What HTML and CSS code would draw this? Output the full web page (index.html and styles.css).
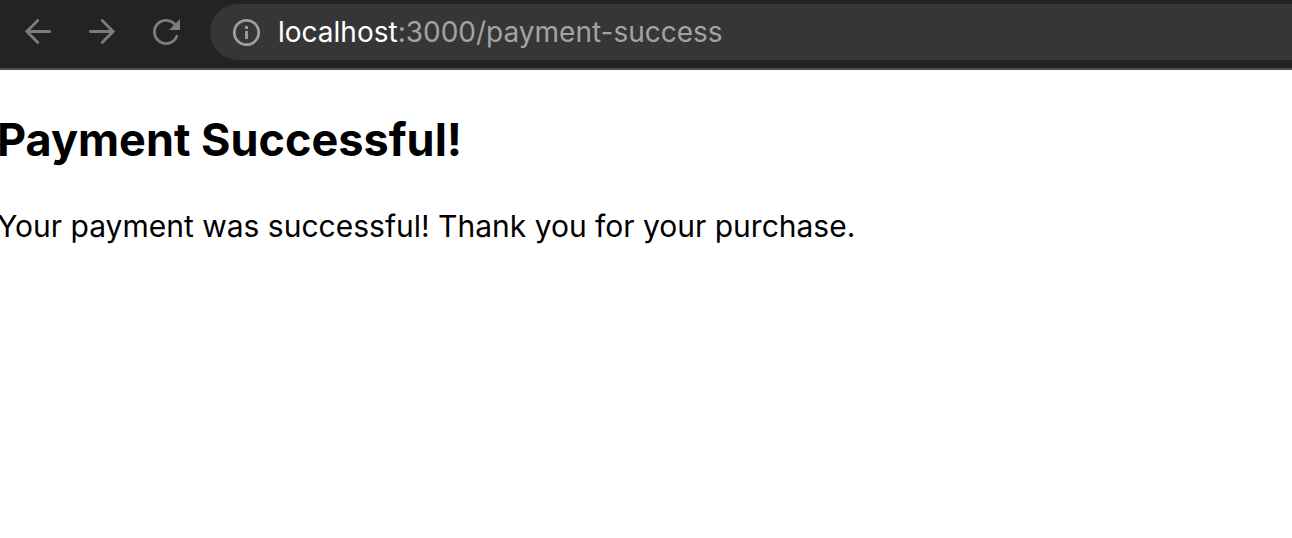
FILE: index.html
```html
<!DOCTYPE html>
<html lang="en">
<head>
<meta charset="utf-8">
<title>Payment Successful</title>
<link rel="stylesheet" href="styles.css">
</head>
<body>
<header class="toolbar">
  <nav class="nav" aria-label="Browser">
    <button class="nav-button" type="button" aria-label="Back">
      <svg class="icon" viewBox="0 0 32 32"><path d="M27.600 15.500H4.800M15.800 4.500L4.800 15.500l11 11"/></svg>
    </button>
    <button class="nav-button" type="button" aria-label="Forward">
      <svg class="icon" viewBox="0 0 32 32"><path d="M4.400 15.500h22.800M16.200 4.500l11 11-11 11"/></svg>
    </button>
    <button class="nav-button" type="button" aria-label="Reload">
      <svg class="icon" viewBox="0 0 32 32"><path d="M26.800 20.200A11.600 11.600 0 1 1 24.500 8"/><path class="fill" d="M30 3v11H19z"/></svg>
    </button>
  </nav>
  <div class="address">
    <svg class="info" viewBox="0 0 28 28"><circle cx="14.500" cy="14.500" r="12.200"/><path d="M14.500 13v8M14.500 8v3"/></svg>
    <a class="url" href="#"><span class="host">localhost</span>:3000/payment-success</a>
  </div>
</header>
<main class="page">
  <h1 class="title">Payment Successful!</h1>
  <p class="message">Your payment was successful! Thank you for your purchase.</p>
</main>
</body>
</html>
```
FILE: styles.css
```css
* { box-sizing: border-box; }
body { margin: 0; background: #fff; color: #000; font-family: Inter, sans-serif; overflow-x: hidden; }
.toolbar { display: flex; align-items: flex-start; padding: 4px 0 8px 22px; background: #232323; border-bottom: 2px solid #4f4f4f; }
.nav { display: flex; align-items: center; gap: 32px; height: 56px; margin-right: 28px; }
.nav-button { display: flex; padding: 0; border: 0; background: none; }
.icon { width: 32px; height: 32px; fill: none; stroke: #7d7d7d; stroke-width: 2.8; stroke-linecap: round; }
.icon .fill { fill: #7d7d7d; stroke: none; }
.address { display: flex; flex: 1; align-items: center; gap: 18px; height: 56px; padding-left: 22px; background: #363636; border-radius: 28px 0 0 28px; }
.info { width: 28px; height: 28px; overflow: visible; fill: none; stroke: #9aa0a6; stroke-width: 2.8; }
.url { color: #a3a3a3; font: 28px/36px Inter, sans-serif; text-decoration: none; white-space: nowrap; }
.host { color: #fff; }
.page { margin-left: -3px; padding-top: 40px; }
.title { margin: 0; font-size: 45px; line-height: 60px; font-weight: 700; }
.message { margin: 36px 0 0; font-size: 30px; line-height: 40px; }
```
